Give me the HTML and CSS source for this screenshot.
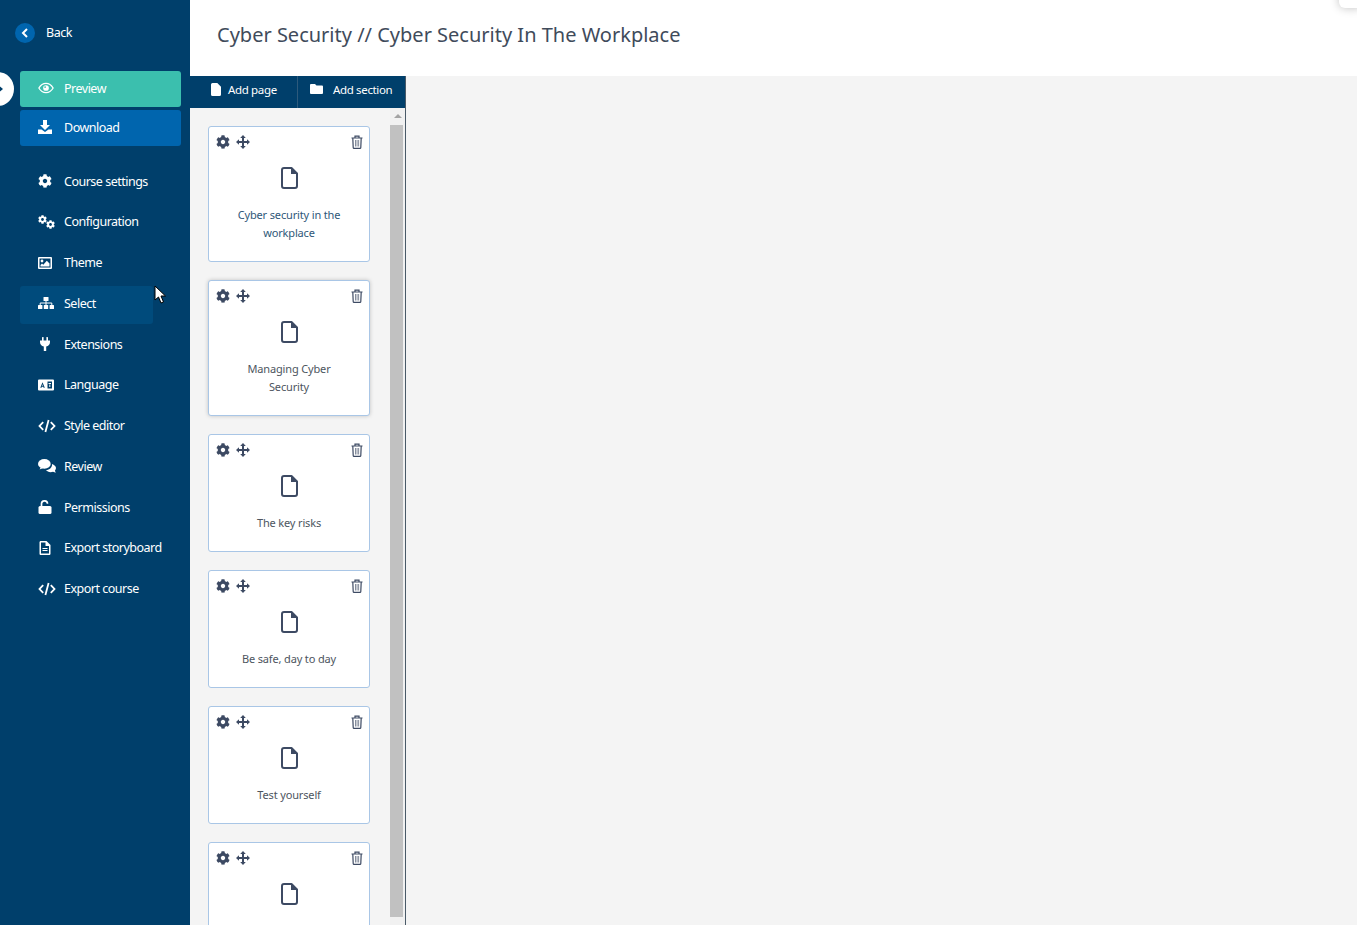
FILE: index.html
```html
<!DOCTYPE html>
<html lang="en">
<head>
    <meta charset="UTF-8">
    <meta name="viewport" content="width=device-width, initial-scale=1.0">
    <title>Cyber Security In The Workplace</title>
    <link rel="stylesheet" href="styles.css">
</head>
<body>
    <!-- Icon sprites -->
    <svg class="sprites" xmlns="http://www.w3.org/2000/svg">
        <symbol id="i-cog" viewBox="0 0 512 512"><path d="M487.4 315.7l-42.6-24.6c4.3-23.2 4.3-47 0-70.2l42.6-24.6c4.9-2.8 7.1-8.6 5.5-14-11.1-35.6-30-67.8-54.7-94.6-3.8-4.1-10-5.1-14.8-2.3L380.8 110c-17.9-15.4-38.5-27.3-60.8-35.1V25.8c0-5.6-3.9-10.5-9.4-11.7-36.7-8.2-74.3-7.8-109.2 0-5.5 1.2-9.4 6.1-9.4 11.7V75c-22.2 7.9-42.8 19.8-60.8 35.1L88.7 85.5c-4.9-2.8-11-1.9-14.8 2.3-24.7 26.7-43.6 58.9-54.7 94.6-1.7 5.4.6 11.2 5.5 14L67.3 221c-4.3 23.2-4.3 47 0 70.2l-42.6 24.6c-4.9 2.8-7.1 8.6-5.5 14 11.1 35.6 30 67.8 54.7 94.6 3.8 4.1 10 5.1 14.8 2.3l42.6-24.6c17.9 15.4 38.5 27.3 60.8 35.1v49.2c0 5.6 3.9 10.5 9.4 11.7 36.7 8.2 74.3 7.8 109.2 0 5.5-1.2 9.4-6.1 9.4-11.7v-49.2c22.2-7.9 42.8-19.8 60.8-35.1l42.6 24.6c4.9 2.8 11 1.9 14.8-2.3 24.7-26.7 43.6-58.9 54.7-94.6 1.5-5.5-.7-11.3-5.6-14.1zM256 336c-44.1 0-80-35.9-80-80s35.9-80 80-80 80 35.9 80 80-35.9 80-80 80z"/></symbol>
        <symbol id="i-eye" viewBox="0 0 18 14"><path fill="none" stroke="currentColor" stroke-width="1.5" d="M1 7c2-3.4 4.800-5.200 8-5.200S15 3.600 17 7c-2 3.400-4.800 5.200-8 5.200S3 10.400 1 7z"/><circle cx="9" cy="7" r="3.200"/><circle cx="8" cy="6" r="1" fill="#3bbfae"/></symbol>
        <symbol id="i-download" viewBox="0 0 14 14"><path d="M5 0h4v5h3L7 10 2 5h3z"/><path d="M0 9.500h3.500L7 12l3.500-2.500H14V14H0z"/></symbol>
        <symbol id="i-image" viewBox="0 0 14 12"><path fill-rule="evenodd" d="M1 0h12a1 1 0 0 1 1 1v10a1 1 0 0 1-1 1H1a1 1 0 0 1-1-1V1a1 1 0 0 1 1-1zm.5 1.500v9h11v-9z"/><circle cx="4" cy="4" r="1.400"/><path d="M2.500 9.500V8L4 6.500 5.300 7.800 8.800 3.800 11.500 6.500v3z"/></symbol>
        <symbol id="i-sitemap" viewBox="0 0 16 12"><rect x="5.500" width="5" height="4" rx=".5"/><rect y="8" width="4.400" height="4" rx=".5"/><rect x="5.800" y="8" width="4.400" height="4" rx=".5"/><rect x="11.600" y="8" width="4.400" height="4" rx=".5"/><path fill="none" stroke="currentColor" d="M8 4v4M2.200 8V6h11.600v2"/></symbol>
        <symbol id="i-plug" viewBox="0 0 10 14"><rect x="2" width="1.600" height="4" rx=".6"/><rect x="6.400" width="1.600" height="4" rx=".6"/><path d="M0 3.500h10v1.500c0 2.500-1.500 4-3.800 4.400V14H3.800V9.400C1.500 9 0 7.500 0 5z"/></symbol>
        <symbol id="i-language" viewBox="0 0 16 11"><path fill-rule="evenodd" d="M1 0h14a1 1 0 0 1 1 1v9a1 1 0 0 1-1 1H1a1 1 0 0 1-1-1V1a1 1 0 0 1 1-1zm8.500 2v7H14V2zM4.500 2.800 2.300 8.200h1.200l.3-.9h1.500l.3.900h1.200zm0 2 .4 1.400H4z"/><path d="M10.500 3.500h2.500v1h-2.500zM11.300 5h1v2.500h-1z"/></symbol>
        <symbol id="i-code" viewBox="0 0 18 13"><path fill="none" stroke="currentColor" stroke-width="1.800" d="M5.200 2.600 1.500 6.500l3.700 3.900M12.800 2.600l3.700 3.900-3.700 3.900M10.600.6 7.400 12.400"/></symbol>
        <symbol id="i-comments" viewBox="0 0 17 13"><ellipse cx="6" cy="4.500" rx="6" ry="4.500"/><path d="M1.500 9.800 3 7l2 1.500z"/><path d="M13.200 4.500c2.200.6 3.800 2.200 3.800 4 0 .9-.4 1.700-1 2.400l.8 1.900-2.600-.9c-.8.300-1.500.4-2.200.4-2 0-3.600-.8-4.500-2 3.500-.2 6.200-2.800 5.700-5.800z"/></symbol>
        <symbol id="i-unlock" viewBox="0 0 13 14"><path fill="none" stroke="currentColor" stroke-width="1.700" d="M3 6.500V4a3 3 0 0 1 6-.3"/><rect y="6" width="13" height="8" rx="1.500"/></symbol>
        <symbol id="i-file-alt" viewBox="0 0 11 14"><path fill-rule="evenodd" d="M1.300 0H7l4 4v8.700c0 .7-.6 1.300-1.300 1.300H1.300C.6 14 0 13.400 0 12.700V1.300C0 .6.600 0 1.300 0zm.2 1.500v11h8V5H6V1.500z"/><path d="M3 7h5v1H3zM3 9h5v1H3z"/></symbol>
        <symbol id="i-file-solid" viewBox="0 0 10 13"><path d="M1.500 0H6.300L10 3.700V11.500A1.500 1.500 0 0 1 8.500 13h-7A1.500 1.500 0 0 1 0 11.500v-10A1.500 1.500 0 0 1 1.500 0z"/></symbol>
        <symbol id="i-folder" viewBox="0 0 13 10"><path d="M1 0h4l1.500 1.500H12a1 1 0 0 1 1 1V9a1 1 0 0 1-1 1H1a1 1 0 0 1-1-1V1a1 1 0 0 1 1-1z"/></symbol>
        <symbol id="i-move" viewBox="0 0 14 14"><path d="M7 0l2.800 3H8v3h3V4.200L14 7l-3 2.800V8H8v3h1.800L7 14l-2.800-3H6V8H3v1.800L0 7l3-2.800V6h3V3H4.200z"/></symbol>
        <symbol id="i-trash" viewBox="0 0 12 14"><path fill="none" stroke="currentColor" stroke-width="1.200" d="M.5 3h11M4 3V1.100h4V3M1.800 3l.4 9.500c0 .5.400.9.900.9h5.800c.5 0 .9-.4.9-.9l.4-9.500"/><path d="M4 5h.9v6.500H4zM5.600 5h.9v6.500h-.9zM7.200 5h.9v6.500h-.9z" opacity=".7"/></symbol>
        <symbol id="i-page" viewBox="0 0 17 22"><path fill="none" stroke="currentColor" stroke-width="2" stroke-linejoin="round" d="M3 1h7.500L16 6.500V19a2 2 0 0 1-2 2H3a2 2 0 0 1-2-2V3a2 2 0 0 1 2-2z"/><path d="M10 1l6 6h-6z"/></symbol>
    </svg>

    <!-- Sidebar -->
    <aside class="sidebar">
        <a class="back">
            <span class="back-circle">
                <svg width="8" height="10" viewBox="0 0 8 10"><path fill="none" stroke="currentColor" stroke-width="2" d="M6 1 2 5l4 4"/></svg>
            </span>
            <span class="back-label">Back</span>
        </a>
        <div class="actions">
            <a class="action action-preview"><svg class="icon icon-eye"><use href="#i-eye"/></svg>Preview</a>
            <a class="action action-download"><svg class="icon"><use href="#i-download"/></svg>Download</a>
        </div>
        <nav class="menu">
            <a class="menu-item"><svg class="icon"><use href="#i-cog"/></svg>Course settings</a>
            <a class="menu-item">
                <span class="icon cogs">
                    <svg class="cog-big"><use href="#i-cog"/></svg>
                    <svg class="cog-small"><use href="#i-cog"/></svg>
                </span>
                Configuration
            </a>
            <a class="menu-item"><svg class="icon"><use href="#i-image"/></svg>Theme</a>
            <a class="menu-item menu-item-active"><svg class="icon icon-mid"><use href="#i-sitemap"/></svg>Select</a>
            <a class="menu-item"><svg class="icon"><use href="#i-plug"/></svg>Extensions</a>
            <a class="menu-item"><svg class="icon icon-mid"><use href="#i-language"/></svg>Language</a>
            <a class="menu-item"><svg class="icon icon-wide"><use href="#i-code"/></svg>Style editor</a>
            <a class="menu-item"><svg class="icon icon-wide"><use href="#i-comments"/></svg>Review</a>
            <a class="menu-item"><svg class="icon"><use href="#i-unlock"/></svg>Permissions</a>
            <a class="menu-item"><svg class="icon"><use href="#i-file-alt"/></svg>Export storyboard</a>
            <a class="menu-item"><svg class="icon icon-wide"><use href="#i-code"/></svg>Export course</a>
        </nav>
    </aside>

    <div class="toggle">
        <svg width="5" height="8" viewBox="0 0 5 8"><path d="M0 0l5 4-5 4z"/></svg>
    </div>

    <!-- Main -->
    <main class="main">
        <header class="header">
            <h1>Cyber Security // Cyber Security In The Workplace</h1>
        </header>
        <div class="workspace">
            <section class="panel">
                <div class="toolbar">
                    <a class="tool tool-page"><svg class="tool-icon"><use href="#i-file-solid"/></svg>Add page</a>
                    <a class="tool tool-section"><svg class="tool-icon tool-icon-folder"><use href="#i-folder"/></svg>Add section</a>
                </div>
                <div class="panel-body">
                    <div class="pages">
                        <div class="card card-first">
                            <div class="card-tools">
                                <svg class="tool-cog"><use href="#i-cog"/></svg>
                                <svg class="tool-move"><use href="#i-move"/></svg>
                                <svg class="tool-trash"><use href="#i-trash"/></svg>
                            </div>
                            <svg class="page-icon"><use href="#i-page"/></svg>
                            <p class="card-title">Cyber security in the workplace</p>
                        </div>
                        <div class="card card-hover">
                            <div class="card-tools">
                                <svg class="tool-cog"><use href="#i-cog"/></svg>
                                <svg class="tool-move"><use href="#i-move"/></svg>
                                <svg class="tool-trash"><use href="#i-trash"/></svg>
                            </div>
                            <svg class="page-icon"><use href="#i-page"/></svg>
                            <p class="card-title">Managing Cyber<br>Security</p>
                        </div>
                        <div class="card">
                            <div class="card-tools">
                                <svg class="tool-cog"><use href="#i-cog"/></svg>
                                <svg class="tool-move"><use href="#i-move"/></svg>
                                <svg class="tool-trash"><use href="#i-trash"/></svg>
                            </div>
                            <svg class="page-icon"><use href="#i-page"/></svg>
                            <p class="card-title">The key risks</p>
                        </div>
                        <div class="card">
                            <div class="card-tools">
                                <svg class="tool-cog"><use href="#i-cog"/></svg>
                                <svg class="tool-move"><use href="#i-move"/></svg>
                                <svg class="tool-trash"><use href="#i-trash"/></svg>
                            </div>
                            <svg class="page-icon"><use href="#i-page"/></svg>
                            <p class="card-title">Be safe, day to day</p>
                        </div>
                        <div class="card">
                            <div class="card-tools">
                                <svg class="tool-cog"><use href="#i-cog"/></svg>
                                <svg class="tool-move"><use href="#i-move"/></svg>
                                <svg class="tool-trash"><use href="#i-trash"/></svg>
                            </div>
                            <svg class="page-icon"><use href="#i-page"/></svg>
                            <p class="card-title">Test yourself</p>
                        </div>
                        <div class="card">
                            <div class="card-tools">
                                <svg class="tool-cog"><use href="#i-cog"/></svg>
                                <svg class="tool-move"><use href="#i-move"/></svg>
                                <svg class="tool-trash"><use href="#i-trash"/></svg>
                            </div>
                            <svg class="page-icon"><use href="#i-page"/></svg>
                        </div>
                    </div>
                    <div class="scrollbar">
                        <span class="scroll-arrow"></span>
                        <span class="scroll-thumb"></span>
                    </div>
                </div>
            </section>
            <div class="canvas"></div>
        </div>
    </main>

    <div class="corner-tab"></div>

    <!-- Mouse pointer -->
    <svg class="pointer" width="13" height="20" viewBox="0 0 13 20"><path fill="#fff" stroke="#000" d="M1 1v14l3.500-3 2.500 6 2.500-1-2.500-6H11.500z"/></svg>
</body>
</html>
```

FILE: styles.css
```css
* {
    box-sizing: border-box;
}

html, body {
    height: 100%;
}

body {
    margin: 0;
    display: flex;
    overflow: hidden;
    font-family: "Noto Sans", Arial, sans-serif;
    background-color: #f4f4f4;
}

.sprites {
    display: none;
}

svg {
    fill: currentColor;
}

/* Sidebar */
.sidebar {
    width: 190px;
    flex-shrink: 0;
    padding-top: 23px;
    background-color: #003f6b;
    color: white;
    font-size: 12.5px;
    letter-spacing: -0.5px;
}

.back {
    display: flex;
    align-items: center;
    gap: 11px;
    height: 20px;
    padding-left: 15px;
}

.back-label {
    padding-bottom: 2px;
}

.back-circle {
    display: flex;
    align-items: center;
    justify-content: center;
    width: 20px;
    height: 20px;
    border-radius: 50%;
    background-color: #0065ae;
}

.actions {
    display: flex;
    flex-direction: column;
    gap: 3px;
    margin: 28px 9px 0 20px;
}

.action {
    display: flex;
    align-items: center;
    height: 36px;
    padding: 0 0 2px 18px;
    border-radius: 3px;
}

.action-preview {
    background-color: #3bbfae;
}

.action-download {
    background-color: #0065ae;
}

.icon {
    width: 14px;
    height: 14px;
    margin-right: 12px;
    flex-shrink: 0;
}

.icon-eye {
    width: 16px;
    margin-right: 10px;
}

.icon-mid {
    width: 16px;
    margin-right: 10px;
}

.icon-wide {
    width: 18px;
    margin-right: 8px;
}

.menu {
    display: flex;
    flex-direction: column;
    margin-top: 18px;
}

.menu-item {
    display: flex;
    align-items: center;
    height: 38px;
    width: 133px;
    margin: 0 0 2.750px 20px;
    padding: 0 0 4px 18px;
    white-space: nowrap;
    border-radius: 3px;
}

.menu-item-active {
    background-color: #004b7c;
}

.cogs {
    position: relative;
    display: block;
    width: 17px;
    margin-right: 9px;
}

.cog-big {
    position: absolute;
    left: 0;
    top: 0;
    width: 9px;
    height: 9px;
}

.cog-small {
    position: absolute;
    left: 8px;
    top: 5px;
    width: 9px;
    height: 9px;
}

.toggle {
    position: absolute;
    left: -18px;
    top: 72px;
    display: flex;
    align-items: center;
    justify-content: flex-end;
    width: 32px;
    height: 34px;
    padding-right: 11px;
    border-radius: 50%;
    background-color: white;
    color: #003f6b;
}

/* Main */
.main {
    flex: 1;
    display: flex;
    flex-direction: column;
    min-width: 0;
}

.header {
    height: 76px;
    flex-shrink: 0;
    padding: 21px 0 0 27px;
    background-color: white;
}

h1 {
    margin: 0;
    font-size: 20px;
    line-height: 28px;
    font-weight: 400;
    color: #3f4b5b;
}

.workspace {
    flex: 1;
    display: flex;
    min-height: 0;
}

.panel {
    width: 216px;
    display: flex;
    flex-direction: column;
    border-right: 1px solid #4a5a68;
}

.toolbar {
    display: flex;
    height: 32px;
    background-color: #003f6b;
    color: white;
    font-size: 11.5px;
    letter-spacing: -0.35px;
}

.tool {
    display: flex;
    align-items: center;
    padding-bottom: 6px;
    white-space: nowrap;
}

.tool-page {
    width: 108px;
    padding-left: 21px;
    border-right: 1px solid #2d5a7c;
}

.tool-section {
    flex: 1;
    padding-left: 12px;
}

.tool-icon {
    width: 10px;
    height: 13px;
    margin-right: 7px;
}

.tool-icon-folder {
    width: 13px;
    height: 10px;
    margin-right: 10px;
}

.panel-body {
    flex: 1;
    display: flex;
    min-height: 0;
}

.pages {
    flex: 1;
    padding: 18px 0 0 18px;
    overflow: hidden;
}

.card {
    width: 162px;
    min-height: 118px;
    margin-bottom: 18px;
    padding-bottom: 19px;
    border: 1px solid #a9c6e6;
    border-radius: 3px;
    background-color: white;
    text-align: center;
}

.card-hover {
    box-shadow: 0 0 4px rgba(0, 0, 0, 0.2);
}

.card-tools {
    display: flex;
    align-items: center;
    height: 14px;
    margin: 8px 6px 0 7px;
    color: #3d4a63;
}

.tool-cog {
    width: 14px;
    height: 14px;
}

.tool-move {
    width: 14px;
    height: 14px;
    margin-left: 6px;
}

.tool-trash {
    width: 12px;
    height: 14px;
    margin-left: auto;
}

.page-icon {
    display: block;
    width: 17px;
    height: 22px;
    margin: 18px auto 0;
    color: #3d4a63;
}

.card-title {
    margin: 17px 0 0;
    padding: 0 20px;
    font-size: 11px;
    line-height: 18px;
    letter-spacing: -0.15px;
    color: #4d5560;
}

.card-first .card-title {
    color: #2f5879;
}

.scrollbar {
    width: 15px;
    flex-shrink: 0;
    display: flex;
    flex-direction: column;
    align-items: center;
    background-color: #f1f1f1;
}

.scroll-arrow {
    width: 0;
    height: 0;
    margin-top: 6px;
    border-left: 4px solid transparent;
    border-right: 4px solid transparent;
    border-bottom: 4px solid #a3a3a3;
}

.scroll-thumb {
    align-self: flex-start;
    width: 13px;
    height: 792px;
    margin-top: 7px;
    background-color: #c1c1c1;
}

.canvas {
    flex: 1;
    background-color: #f4f4f4;
}

.corner-tab {
    position: absolute;
    right: -6px;
    top: -10px;
    width: 24px;
    height: 18px;
    border-radius: 6px;
    background-color: white;
    box-shadow: 0 0 10px rgba(0, 0, 0, 0.25);
}

.pointer {
    position: absolute;
    left: 154px;
    top: 285px;
}
```
